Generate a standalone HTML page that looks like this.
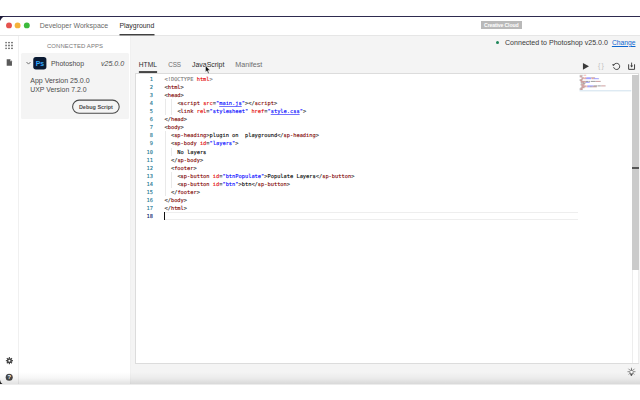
<!DOCTYPE html>
<html>
<head>
<meta charset="utf-8">
<title>Playground</title>
<style>
*{box-sizing:border-box;margin:0;padding:0}
html,body{width:640px;height:400px;overflow:hidden;background:#fff}
body{position:relative;font-family:"Liberation Sans",sans-serif;color:#4b4b4b;-webkit-font-smoothing:antialiased}
.abs{position:absolute;white-space:nowrap}
#topline{left:0;top:16px;width:640px;height:1px;background:#2e2b4f}
#win{left:0;top:17px;width:640px;height:367px;background:#f4f4f4;overflow:hidden}
#titlebar{z-index:2;left:0;top:0;width:640px;height:19px;background:#fff;border-bottom:1px solid #e6e6e6}
.tl{width:5.9px;height:5.9px;border-radius:50%}
.t{line-height:10px;font-size:7.3px}
#rail{left:0;top:18px;width:19px;height:349px;background:#fff;border-right:1px solid #f0f0f0}
#side{left:19px;top:18px;width:112px;height:349px;background:#fff;border-right:1px solid #f0f0f0}
#card{left:2px;top:18px;width:107.5px;height:65.5px;background:#f4f4f4;border-radius:1.5px}
#editor{left:135px;top:56px;width:504px;height:291px;background:#fff;border:1px solid #dcdcdc}
.code{font-family:"DejaVu Sans Mono","Liberation Mono",monospace;font-size:5.35px;line-height:8.09px;color:#000}
.ig{width:1px;background:#e9e9e9}
.ln{left:0;width:15.5px;text-align:right;color:#237893}
.cur{color:#0b216f}
.cl{left:27px}
.code{-webkit-text-stroke:0.1px currentColor}.g{color:#808080}.d{color:#383838}.tg{color:#800000}.an{color:#e50000}.av{color:#0000ff}.lk{color:#0000ff;text-decoration:underline;text-decoration-thickness:0.45px;text-underline-offset:0.5px;text-decoration-color:rgba(0,0,255,.55)}
</style>
</head>
<body>
<div id="topline" class="abs"></div>
<div id="win" class="abs">
  <div id="titlebar" class="abs">
    <div class="abs t" id="tw" style="left:39.75px;top:3.7px;color:#6a6a6a;font-size:6.97px">Developer Workspace</div>
    <div class="abs t" id="tp" style="left:119.4px;top:3.7px;color:#2c2c2c;font-size:6.9px">Playground</div>
    <div class="abs" id="cc" style="left:481px;top:3.9px;width:40.5px;height:8.2px;background:#b9b9b9;color:#fff;font-size:5.17px;line-height:8.4px;text-align:center;font-weight:bold;letter-spacing:-0.15px">Creative Cloud</div>
  </div>
  <div id="rail" class="abs">
    
    
    
    
  </div>
  <div id="side" class="abs">
    <div class="abs" id="ca" style="left:0;top:6.1px;width:112px;text-align:center;font-size:5.95px;line-height:10px;color:#7a7a7a;letter-spacing:0.1px">CONNECTED APPS</div>
    <div id="card" class="abs">
      
      <div class="abs t" id="ph" style="left:29.9px;top:5.8px;color:#4b4b4b;font-size:6.95px">Photoshop</div>
      <div class="abs t" id="pv" style="left:79.9px;top:6.0px;color:#4b4b4b;font-size:7.1px;font-style:italic">v25.0.0</div>
      <div class="abs t" id="av" style="left:9.2px;top:22.9px;color:#4b4b4b;font-size:7.04px">App Version 25.0.0</div>
      <div class="abs t" id="uv" style="left:9.2px;top:32.3px;color:#4b4b4b;font-size:6.91px">UXP Version 7.2.0</div>
      <div class="abs" id="db" style="left:51.1px;top:46.7px;width:47.6px;height:14.1px;border:0.8px solid transparent;border-radius:7px;font-size:5.46px;font-weight:bold;line-height:12.3px;text-align:center;color:#4b4b4b">Debug Script</div>
    </div>
  </div>
  <!-- status -->
  <div class="abs" style="left:495.8px;top:23.9px;width:3.5px;height:3.5px;border-radius:50%;background:#1d8558"></div>
  <div class="abs t" id="st" style="left:505px;top:20.8px;color:#3a3a3a;font-size:7.07px">Connected to Photoshop v25.0.0</div>
  <div class="abs t" id="ch" style="left:611.9px;top:20.8px;color:#0d66d0;text-decoration:underline;font-size:6.74px">Change</div>
  <!-- tabs -->
  <div class="abs t" id="t1" style="left:138.8px;top:43.0px;color:#2c2c2c;font-size:6.68px">HTML</div>
  <div class="abs t" id="t2" style="left:168.3px;top:43.0px;color:#6e6e6e;font-size:6.3px;letter-spacing:-0.1px">CSS</div>
  <div class="abs t" id="t3" style="left:192px;top:43.0px;color:#2c2c2c;font-size:6.94px">JavaScript</div>
  <div class="abs t" id="t4" style="left:235.3px;top:42.5px;color:#6e6e6e;font-size:7.17px">Manifest</div>
  
  <!-- toolbar icons -->
  
  <div class="abs" style="left:597.9px;top:43.9px;font-size:7px;line-height:10px;color:#c2c2c2;letter-spacing:1.2px">{}</div>
  
  
  <!-- editor -->
  <div id="editor" class="abs">
    <div id="lines" class="abs code" style="left:1.5px;top:0.5px;width:495px;height:288px">
<div class="abs ln" style="top:0.20px">1</div><div class="abs cl" style="top:0.20px;white-space:pre"><span class="g">&lt;!DOCTYPE</span> <span class="an">html</span><span class="g">&gt;</span></div>
<div class="abs ln" style="top:8.29px">2</div><div class="abs cl" style="top:8.29px;white-space:pre"><span class="d">&lt;</span><span class="tg">html</span><span class="d">&gt;</span></div>
<div class="abs ln" style="top:16.38px">3</div><div class="abs cl" style="top:16.38px;white-space:pre"><span class="d">&lt;</span><span class="tg">head</span><span class="d">&gt;</span></div>
<div class="abs ln" style="top:24.47px">4</div><div class="abs cl" style="top:24.47px;white-space:pre">    <span class="d">&lt;</span><span class="tg">script</span> <span class="an">src</span><span class="d">=</span><span class="av">"</span><span class="lk">main.js</span><span class="av">"</span><span class="d">&gt;</span><span class="d">&lt;/</span><span class="tg">script</span><span class="d">&gt;</span></div>
<div class="abs ln" style="top:32.56px">5</div><div class="abs cl" style="top:32.56px;white-space:pre">    <span class="d">&lt;</span><span class="tg">link</span> <span class="an">rel</span><span class="d">=</span><span class="av">"stylesheet"</span> <span class="an">href</span><span class="d">=</span><span class="av">"</span><span class="lk">style.css</span><span class="av">"</span><span class="d">&gt;</span></div>
<div class="abs ln" style="top:40.65px">6</div><div class="abs cl" style="top:40.65px;white-space:pre"><span class="d">&lt;/</span><span class="tg">head</span><span class="d">&gt;</span></div>
<div class="abs ln" style="top:48.74px">7</div><div class="abs cl" style="top:48.74px;white-space:pre"><span class="d">&lt;</span><span class="tg">body</span><span class="d">&gt;</span></div>
<div class="abs ln" style="top:56.83px">8</div><div class="abs cl" style="top:56.83px;white-space:pre">  <span class="d">&lt;</span><span class="tg">sp-heading</span><span class="d">&gt;</span>plugin on  playground<span class="d">&lt;/</span><span class="tg">sp-heading</span><span class="d">&gt;</span></div>
<div class="abs ln" style="top:64.92px">9</div><div class="abs cl" style="top:64.92px;white-space:pre">  <span class="d">&lt;</span><span class="tg">sp-body</span> <span class="an">id</span><span class="d">=</span><span class="av">"layers"</span><span class="d">&gt;</span></div>
<div class="abs ln" style="top:73.01px">10</div><div class="abs cl" style="top:73.01px;white-space:pre">    No layers</div>
<div class="abs ln" style="top:81.10px">11</div><div class="abs cl" style="top:81.10px;white-space:pre">  <span class="d">&lt;/</span><span class="tg">sp-body</span><span class="d">&gt;</span></div>
<div class="abs ln" style="top:89.19px">12</div><div class="abs cl" style="top:89.19px;white-space:pre">  <span class="d">&lt;</span><span class="tg">footer</span><span class="d">&gt;</span></div>
<div class="abs ln" style="top:97.28px">13</div><div class="abs cl" style="top:97.28px;white-space:pre">    <span class="d">&lt;</span><span class="tg">sp-button</span> <span class="an">id</span><span class="d">=</span><span class="av">"btnPopulate"</span><span class="d">&gt;</span>Populate Layers<span class="d">&lt;/</span><span class="tg">sp-button</span><span class="d">&gt;</span></div>
<div class="abs ln" style="top:105.37px">14</div><div class="abs cl" style="top:105.37px;white-space:pre">    <span class="d">&lt;</span><span class="tg">sp-button</span> <span class="an">id</span><span class="d">=</span><span class="av">"btn"</span><span class="d">&gt;</span>btn<span class="d">&lt;/</span><span class="tg">sp-button</span><span class="d">&gt;</span></div>
<div class="abs ln" style="top:113.46px">15</div><div class="abs cl" style="top:113.46px;white-space:pre">  <span class="d">&lt;/</span><span class="tg">footer</span><span class="d">&gt;</span></div>
<div class="abs ln" style="top:121.55px">16</div><div class="abs cl" style="top:121.55px;white-space:pre"><span class="d">&lt;/</span><span class="tg">body</span><span class="d">&gt;</span></div>
<div class="abs ln" style="top:129.64px">17</div><div class="abs cl" style="top:129.64px;white-space:pre"><span class="d">&lt;/</span><span class="tg">html</span><span class="d">&gt;</span></div>
<div class="abs ln cur" style="top:137.73px">18</div><div class="abs cl" style="top:137.73px;white-space:pre"></div>

    <!-- current line highlight -->
    <div class="abs" style="left:26.5px;top:137.3px;width:413.5px;height:8.6px;border-top:1px solid #eeeeee;border-bottom:1px solid #eeeeee"></div>
    <div class="abs" style="left:26.8px;top:137.6px;width:1px;height:8.2px;background:#111"></div>
    <!-- indent guides -->
    <div class="abs ig" style="left:27.0px;top:24.5px;height:16.2px"></div>
    <div class="abs ig" style="left:33.4px;top:24.5px;height:16.2px"></div>
    <div class="abs ig" style="left:27.0px;top:56.8px;height:64.7px"></div>
    <div class="abs ig" style="left:33.4px;top:73.0px;height:8.1px"></div>
    <div class="abs ig" style="left:33.4px;top:97.3px;height:16.2px"></div>
    <!-- minimap -->
    
    <!-- scrollbar -->
    <div class="abs" style="left:494px;top:0;width:7.2px;height:288px;border-left:1px solid #ededed;border-right:1px solid #ededed;background:#fff"></div>
    <div class="abs" style="left:494px;top:0;width:7.2px;height:195px;background:#cbcbcb"></div>
    <div class="abs" style="left:494px;top:92.5px;width:7.2px;height:2px;background:#555"></div>
    </div>
  </div>
  <!-- bulb -->
  
  <div class="abs" style="left:0;top:355px;width:640px;height:12px;background:linear-gradient(to bottom,rgba(0,0,0,0) 0%,rgba(0,0,0,0.035) 50%,rgba(0,0,0,0.115) 100%)"></div>
</div>


<div class="abs" style="left:0;top:384px;width:640px;height:1px;background:#ececec"></div>
<svg id="ov" class="abs" style="left:0;top:0;z-index:5" width="640" height="400" viewBox="0 0 640 400">
<svg x="5.19" y="41.69" width="8" height="7.6" viewBox="0 0 8 7.6"><g fill="#606060"><rect x="0" y="0" width="1.6" height="1.6"/><rect x="3" y="0" width="1.6" height="1.6"/><rect x="6" y="0" width="1.6" height="1.6"/><rect x="0" y="3" width="1.6" height="1.6"/><rect x="3" y="3" width="1.6" height="1.6"/><rect x="6" y="3" width="1.6" height="1.6"/><rect x="0" y="6" width="1.6" height="1.6"/><rect x="3" y="6" width="1.6" height="1.6"/><rect x="6" y="6" width="1.6" height="1.6"/></g></svg>
<svg x="6.30" y="59.00" width="6.1" height="7" viewBox="0 0 7 8"><path d="M0.3 0.3h4l2.2 2.2v5.2h-6.2z" fill="#5a5a5a"/><path d="M4.3 0.3v2.2h2.2" fill="#fff" stroke="#5a5a5a" stroke-width="0.5"/></svg>
<svg x="5.4" y="356.7" width="8" height="8" viewBox="-4 -4 8 8"><g fill="#444"><rect x="-0.6" y="-3.6" width="1.2" height="1.7" transform="rotate(0)"/><rect x="-0.6" y="-3.6" width="1.2" height="1.7" transform="rotate(45)"/><rect x="-0.6" y="-3.6" width="1.2" height="1.7" transform="rotate(90)"/><rect x="-0.6" y="-3.6" width="1.2" height="1.7" transform="rotate(135)"/><rect x="-0.6" y="-3.6" width="1.2" height="1.7" transform="rotate(180)"/><rect x="-0.6" y="-3.6" width="1.2" height="1.7" transform="rotate(225)"/><rect x="-0.6" y="-3.6" width="1.2" height="1.7" transform="rotate(270)"/><rect x="-0.6" y="-3.6" width="1.2" height="1.7" transform="rotate(315)"/><path fill-rule="evenodd" d="M0-2.5a2.5 2.5 0 1 0 0 5a2.5 2.5 0 1 0 0-5zM0-1.05a1.05 1.05 0 1 1 0 2.1a1.05 1.05 0 1 1 0-2.1z"/></g></svg>
<svg x="5.19" y="373.19" width="8" height="8" viewBox="0 0 8 8"><circle cx="4" cy="4" r="3.55" fill="#444"/><text x="4" y="6.1" font-size="5.8" font-weight="bold" text-anchor="middle" fill="#fff" font-family="Liberation Sans, sans-serif">?</text></svg>
<svg x="26.0" y="61.2" width="5" height="4" viewBox="0 0 5 4"><path d="M0.5 0.8L2.5 2.9L4.5 0.8" fill="none" stroke="#555" stroke-width="0.8"/></svg>
<svg x="205.00" y="65.50" width="6" height="9" viewBox="0 0 6 9"><path d="M0.5 0.3L0.5 6.6L2 5.3L3.1 7.9L4.1 7.5L3 4.9L5 4.8Z" fill="#111" stroke="#fff" stroke-width="0.4"/></svg>
<svg x="582.50" y="62.50" width="7" height="8" viewBox="0 0 7 8"><path d="M0.4 0.4L6.5 3.8L0.4 7.2Z" fill="#3a3a3a"/></svg>
<svg x="611.7" y="62.3" width="9" height="9" viewBox="0 0 9 9"><path d="M2.36 2.32A3.1 3.1 0 1 1 1.91 4.9" fill="none" stroke="#3a3a3a" stroke-width="0.95"/><path d="M0.6 1.6L3.3 2.2L1.3 3.9Z" fill="#3a3a3a"/></svg>
<svg x="628" y="62" width="8" height="8" viewBox="0 0 8 8"><path d="M0.65 2.3V7.35H6.55V2.3" fill="none" stroke="#404040" stroke-width="1"/><path d="M3.6 0.6V4.2" stroke="#3a3a3a" stroke-width="0.9"/><path d="M2.1 3.6L3.6 5.5L5.1 3.6Z" fill="#3a3a3a"/></svg>
<svg x="578.50" y="74.50" width="53" height="20" viewBox="0 0 53 20"><g stroke-width="0.62" fill="none" opacity="0.62"><path d="M1.20 0.60h3.96M7.36 0.60h0.44" stroke="#808080"/><path d="M5.60 0.60h1.76M6.48 3.30h1.32M5.60 4.20h1.32M13.08 4.20h1.76M6.04 7.80h0.88M7.80 11.40h0.88M7.80 12.30h0.88" stroke="#e50000"/><path d="M1.20 1.50h0.44M3.40 1.50h0.44M1.20 2.40h0.44M3.40 2.40h0.44M2.96 3.30h0.44M7.80 3.30h0.44M12.20 3.30h0.44M12.64 3.30h0.88M16.16 3.30h0.44M2.96 4.20h0.44M6.92 4.20h0.44M14.84 4.20h0.44M20.12 4.20h0.44M1.20 5.10h0.88M3.84 5.10h0.44M1.20 6.00h0.44M3.40 6.00h0.44M2.08 6.90h0.44M6.92 6.90h0.44M16.60 6.90h0.88M21.88 6.90h0.44M2.08 7.80h0.44M6.92 7.80h0.44M10.88 7.80h0.44M2.08 9.60h0.88M6.04 9.60h0.44M2.08 10.50h0.44M5.16 10.50h0.44M2.96 11.40h0.44M8.68 11.40h0.44M14.84 11.40h0.44M21.88 11.40h0.88M26.72 11.40h0.44M2.96 12.30h0.44M8.68 12.30h0.44M11.32 12.30h0.44M13.08 12.30h0.88M17.92 12.30h0.44M2.08 13.20h0.88M5.60 13.20h0.44M1.20 14.10h0.88M3.84 14.10h0.44M1.20 15.00h0.88M3.84 15.00h0.44" stroke="#383838"/><path d="M1.64 1.50h1.76M1.64 2.40h1.76M3.40 3.30h2.64M13.52 3.30h2.64M3.40 4.20h1.76M2.08 5.10h1.76M1.64 6.00h1.76M2.52 6.90h4.40M17.48 6.90h4.40M2.52 7.80h3.08M2.96 9.60h3.08M2.52 10.50h2.64M3.40 11.40h3.96M22.76 11.40h3.96M3.40 12.30h3.96M13.96 12.30h3.96M2.96 13.20h2.64M2.08 14.10h1.76M2.08 15.00h1.76" stroke="#800000"/><path d="M8.24 3.30h3.96M7.36 4.20h5.28M15.28 4.20h4.84M7.36 7.80h3.52M9.12 11.40h5.72M9.12 12.30h2.20" stroke="#0000ff"/><path d="M7.36 6.90h2.64M10.44 6.90h0.88M12.20 6.90h4.40M2.96 8.70h0.88M4.28 8.70h2.64M15.28 11.40h3.52M19.24 11.40h2.64M11.76 12.30h1.32" stroke="#000000"/></g><path d="M1 16.3H53" stroke="#c4d9e8" stroke-width="0.8"/></svg>
<svg x="627.30" y="367.59" width="8.4" height="8.4" viewBox="0 0 9 9"><g stroke="#3a3a3a" stroke-width="0.6" fill="none" stroke-linecap="round"><path d="M4.5 2.5a1.85 1.85 0 0 1 1.05 3.4v0.9h-2.1v-0.9a1.85 1.85 0 0 1 1.05-3.4z" fill="#fff" stroke-width="0.7"/><path d="M3.6 7.4h1.8l-0.5 1h-0.8z" fill="#222" stroke="#222" stroke-width="0.4"/><path d="M4.5 0.3v1.1M1.5 1.5l0.8 0.8M7.5 1.5l-0.8 0.8M0.4 4.4h1.1M8.6 4.4h-1.1M1.7 7l0.7-0.6M7.3 7l-0.7-0.6"/></g></svg>
<svg x="0.00" y="16.00" width="5" height="6" viewBox="0 0 5 6"><path d="M0 0H4.6Q1.5 1.5 0 5Z" fill="#1d1a38"/></svg>
<svg x="0.00" y="379.00" width="3" height="5" viewBox="0 0 3 5"><path d="M0 5H2.6C1.2 4.4 0.4 3 0 0.8Z" fill="#222"/></svg>
<rect x="33.25" y="57" width="13.15" height="12.5" rx="2.7" fill="#0a1a33"/>
<text x="39.9" y="65.55" font-family="Liberation Sans, sans-serif" font-weight="bold" font-size="6.9" letter-spacing="-0.15" text-anchor="middle" fill="#31a8ff">Ps</text>
<rect x="72.6" y="100.1" width="46.6" height="13.1" rx="6.55" fill="none" stroke="#484848" stroke-width="1.05"/>
<circle cx="9" cy="25.4" r="2.95" fill="#e5534f"/><circle cx="17.6" cy="25.4" r="2.95" fill="#f4b23a"/><circle cx="26.8" cy="25.4" r="2.95" fill="#3cba3c"/>
<rect x="119.5" y="34.1" width="35" height="1.3" fill="#2c2c2c"/><rect x="138.9" y="71.15" width="18.2" height="1.75" fill="#333"/>
</svg>
</body>
</html>
